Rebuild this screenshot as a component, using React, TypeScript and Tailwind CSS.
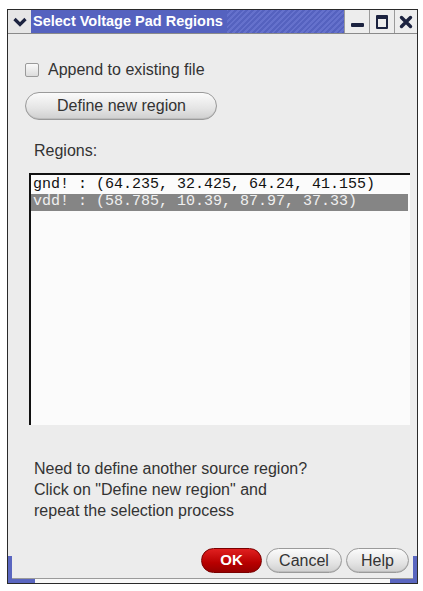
import React from 'react';

const regions = [
    { name: 'gnd!', coords: '(64.235, 32.425, 64.24, 41.155)', selected: false },
    { name: 'vdd!', coords: '(58.785, 10.39, 87.97, 37.33)', selected: true },
];

function PillButton({ children, className = '' }: { children: React.ReactNode; className?: string }) {
    return (
        <div
            className={`flex items-center justify-center rounded-full border border-[#9a9a9a] bg-[linear-gradient(#fbfbfb,#e4e4e4_60%,#cfcfcf)] text-[16px] text-[#333] shadow-[inset_0_-1px_0_#bdbdbd] ${className}`}
        >
            {children}
        </div>
    );
}

export default function App() {
    return (
        <div className="h-[591px] w-[423px] bg-white pl-[7px] pt-[9px]" style={{ fontFamily: '"Liberation Sans", Arial, sans-serif' }}>
            <div className="relative flex h-[575px] w-[411px] flex-col border border-[#2a2a2a] bg-[#ececec]">
                {/* Title bar */}
                <div className="flex h-[24px] border-b border-[#8a8a8a]">
                    <div className="flex w-[23px] items-center justify-center bg-[#e6e6e6]">
                        <svg width="14" height="10" viewBox="0 0 14 10">
                            <path d="M1.5 2 L7 7.5 L12.5 2" fill="none" stroke="#1c2340" strokeWidth="3.2" />
                        </svg>
                    </div>
                    <div className="flex flex-1 items-center bg-[repeating-linear-gradient(135deg,#5562bf_0px,#5562bf_2px,#6571cc_2px,#6571cc_4px)]">
                        <div className="flex h-full items-center bg-[#5562bf] pl-[2px] pr-[4px] text-[14.5px] font-bold text-white">
                            Select Voltage Pad Regions
                        </div>
                    </div>
                    <div className="flex w-[25px] items-center justify-center border-l border-[#9a9a9a] bg-[#ededed]">
                        <div className="mt-[6px] h-[4px] w-[13px] rounded-[1px] bg-[#1c2340]" />
                    </div>
                    <div className="flex w-[25px] items-center justify-center border-l border-[#9a9a9a] bg-[#ededed]">
                        <div className="h-[14px] w-[12px] rounded-[1px] border-2 border-t-[4px] border-[#1c2340]" />
                    </div>
                    <div className="flex w-[23px] items-center justify-center border-l border-[#9a9a9a] bg-[#ededed]">
                        <svg width="14" height="14" viewBox="0 0 14 14">
                            <path d="M2.5 2.5 L11.5 11.5 M11.5 2.5 L2.5 11.5" stroke="#1c2340" strokeWidth="3.4" strokeLinecap="round" />
                        </svg>
                    </div>
                </div>

                {/* Body */}
                <div className="flex flex-1 flex-col pl-[17px] pr-[7px]">
                    <div className="mt-[29px] flex h-[14px] items-center gap-[9px] text-[16px] leading-none text-[#333]">
                        <div className="h-[14px] w-[14px] rounded-[2px] border border-[#9a9a9a] bg-[linear-gradient(#fafafa,#dcdcdc)]" />
                        <span>Append to existing file</span>
                    </div>

                    <PillButton className="mt-[15px] h-[28px] w-[192px] pl-[1px]">Define new region</PillButton>

                    <div className="mt-[22px] pl-[9px] text-[16px] leading-[18px] text-[#333]">Regions:</div>

                    <div className="ml-[4px] mt-[13px] h-[252px] w-[381px] border-l-[2px] border-t-[2px] border-[#111] bg-[#fbfbfb] pr-[2px] pt-[2px]" style={{ fontFamily: '"Liberation Mono", "Courier New", monospace' }}>
                        {regions.map((r) => (
                            <div
                                key={r.name}
                                className={`flex h-[17px] items-center whitespace-pre pl-[2px] text-[15px] ${r.selected ? 'bg-[#858585] text-[#f0f0f0]' : 'text-[#111]'}`}
                            >
                                {`${r.name} : ${r.coords}`}
                            </div>
                        ))}
                    </div>

                    <div className="mt-[33px] pl-[9px] text-[16px] leading-[21px] text-[#333]">
                        <div>Need to define another source region?</div>
                        <div>Click on "Define new region" and</div>
                        <div>repeat the selection process</div>
                    </div>

                    <div className="mt-[27px] flex justify-end gap-[4px] pr-[1px]">
                        <div className="flex h-[25px] w-[61px] items-center justify-center rounded-full border border-[#7a0000] bg-[linear-gradient(#e02020,#b80000_60%,#960000)] text-[15px] font-bold text-white">
                            OK
                        </div>
                        <PillButton className="h-[25px] w-[76px]">Cancel</PillButton>
                        <PillButton className="h-[25px] w-[63px]">Help</PillButton>
                    </div>
                </div>

                {/* Frame bottom strip */}
                <div className="mt-[4px] h-[5px] border-t border-[#9a9a9a] bg-[#f8f8f8]" />

                {/* Blue frame corners */}
                <div className="absolute bottom-0 left-0 h-[27px] w-[4px] bg-[#5a66c0]" />
                <div className="absolute bottom-0 left-0 h-[4px] w-[27px] bg-[#5a66c0]" />
                <div className="absolute bottom-0 right-0 h-[27px] w-[4px] bg-[#5a66c0]" />
                <div className="absolute bottom-0 right-0 h-[4px] w-[27px] bg-[#5a66c0]" />
            </div>
        </div>
    );
}
